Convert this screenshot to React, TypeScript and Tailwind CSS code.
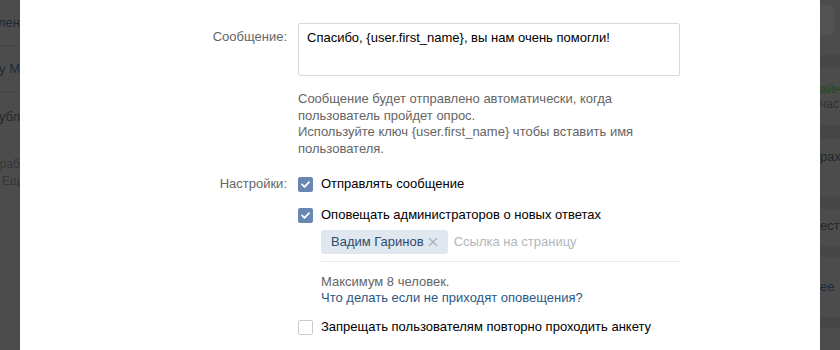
import React from 'react';

const font = { fontFamily: '"Liberation Sans", Arial, sans-serif' };

const Check = ({ checked }: { checked: boolean }) =>
  checked ? (
    <span className="w-[15px] h-[15px] rounded-[2px] bg-[#6787b1] flex items-center justify-center shrink-0">
      <svg width="9" height="7" viewBox="0 0 9 7" fill="none">
        <path d="M1 3.4 L3.5 5.8 L8 1.2" stroke="#fff" strokeWidth="1.8" strokeLinecap="round" strokeLinejoin="round" />
      </svg>
    </span>
  ) : (
    <span className="w-[15px] h-[15px] rounded-[2px] border border-[#c5ccd4] bg-white shrink-0" />
  );

const CheckRow = ({ checked, children }: { checked: boolean; children: React.ReactNode }) => (
  <div className="flex items-center gap-[8px] h-[16px] text-[13px] text-[#000]">
    <Check checked={checked} />
    <span className="leading-[16px] whitespace-nowrap">{children}</span>
  </div>
);

const LeftBackdrop = () => (
  <div className="w-[20px] shrink-0 flex flex-col overflow-hidden bg-[#4c4c4c] text-[13px]">
    <div className="h-[46px] flex items-center justify-end whitespace-nowrap text-[#22282e] border-b border-[#444]">Уведомлен</div>
    <div className="h-[47px] flex items-center justify-end whitespace-nowrap text-[#1b2b3d] border-b border-[#444]">Группу М</div>
    <div className="h-[48px] flex items-center justify-end whitespace-nowrap text-[#22282e]">Публ</div>
    <div className="h-[16px] mt-[15px] flex items-center justify-end whitespace-nowrap text-[12px] text-[#363636]">Обраб</div>
    <div className="h-[18px] flex items-center justify-end whitespace-nowrap text-[12px] text-[#363636]">Ещ</div>
  </div>
);

const RightBackdrop = () => (
  <div className="w-[20px] shrink-0 flex flex-col overflow-hidden bg-[#4c4c4c] text-[13px]">
    <div className="h-[5px]" />
    <div className="h-[30px] w-[14px] rounded-r-[4px] bg-[#535353]" />
    <div className="h-[20px]" />
    <div className="h-[13px] bg-[#474747]" />
    <div className="h-[13px]" />
    <div className="h-[16px] whitespace-nowrap text-[#1f4a22] leading-[16px]">айн</div>
    <div className="h-[14px] whitespace-nowrap text-[12px] text-[#303030] leading-[14px]">час</div>
    <div className="h-[14px]" />
    <div className="h-[14px] bg-[#474747]" />
    <div className="h-[10px]" />
    <div className="h-[16px] whitespace-nowrap text-[#22282e] leading-[16px]">рах</div>
    <div className="h-[31px]" />
    <div className="h-[13px] bg-[#474747]" />
    <div className="h-[9px]" />
    <div className="h-[16px] whitespace-nowrap text-[#22282e] leading-[16px]">ести</div>
    <div className="h-[12px]" />
    <div className="h-[11px] bg-[#474747]" />
    <div className="h-[22px]" />
    <div className="h-[16px] whitespace-nowrap text-[#1b2b3d] leading-[16px]">ее</div>
    <div className="h-[22px]" />
    <div className="h-[11px] bg-[#474747]" />
  </div>
);

export default function App() {
  return (
    <div className="w-[840px] h-[350px] flex overflow-hidden bg-[#4c4c4c]" style={font}>
      <LeftBackdrop />
      <div className="w-[800px] shrink-0 bg-white pt-[23px]">
        <div className="grid grid-cols-[267px_382px] gap-x-[11px]">
          <div className="text-right text-[13px] text-[#656565] pt-[6px] leading-[16px]">Сообщение:</div>
          <div className="h-[53px] border border-[#d3d9de] rounded-[2px] px-[8px] pt-[6px] text-[13px] leading-[16px] text-[#000] whitespace-nowrap">
            Спасибо, {'{user.first_name}'}, вы нам очень помогли!
          </div>

          <div />
          <div className="mt-[15px] text-[13px] leading-[16.5px] text-[#656565] whitespace-nowrap">
            Сообщение будет отправлено автоматически, когда
            <br />
            пользователь пройдет опрос.
            <br />
            Используйте ключ {'{user.first_name}'} чтобы вставить имя
            <br />
            пользователя.
          </div>

          <div className="mt-[19px] text-right text-[13px] text-[#656565] leading-[16px]">Настройки:</div>
          <div className="mt-[19px] flex flex-col">
            <CheckRow checked>Отправлять сообщение</CheckRow>
            <div className="mt-[15px]">
              <CheckRow checked>Оповещать администраторов о новых ответах</CheckRow>
            </div>
            <div className="ml-[23px] mt-[7px] flex items-center gap-[6px] pb-[7px] border-b border-[#e7e8ec]">
              <span className="h-[24px] px-[10px] rounded-[3px] bg-[#e1e7ee] flex items-center gap-[4px] text-[13px] text-[#2e4b6e] whitespace-nowrap">
                Вадим Гаринов
                <svg width="10" height="10" viewBox="0 0 10 10">
                  <path d="M1 1 L9 9 M9 1 L1 9" stroke="#a6b3c2" strokeWidth="1.3" />
                </svg>
              </span>
              <span className="text-[13px] text-[#b2b6bc] whitespace-nowrap">Ссылка на страницу</span>
            </div>
            <div className="ml-[23px] mt-[12px] text-[13px] leading-[16px] whitespace-nowrap">
              <div className="text-[#656565]">Максимум 8 человек.</div>
              <div className="text-[#2a5885]">Что делать если не приходят оповещения?</div>
            </div>
            <div className="mt-[13px]">
              <CheckRow checked={false}>Запрещать пользователям повторно проходить анкету</CheckRow>
            </div>
          </div>
        </div>
      </div>
      <RightBackdrop />
    </div>
  );
}
